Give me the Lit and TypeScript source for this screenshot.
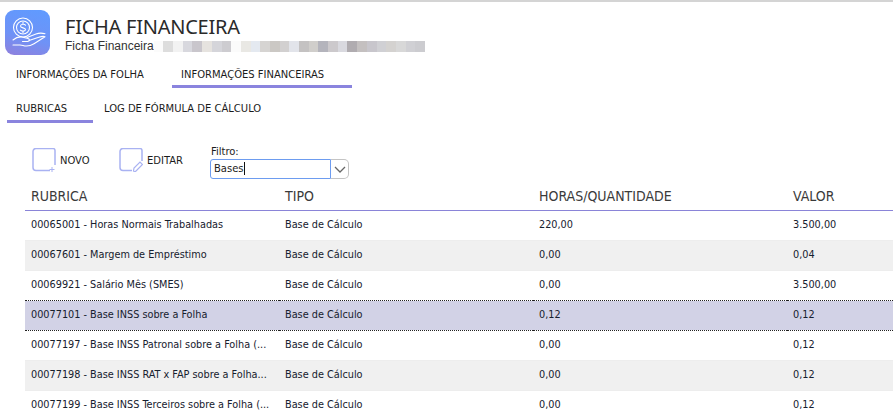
import { LitElement, html, css, svg } from "lit";
import { customElement } from "lit/decorators.js";

const rows = [
  ["00065001 - Horas Normais Trabalhadas", "Base de Cálculo", "220,00", "3.500,00"],
  ["00067601 - Margem de Empréstimo", "Base de Cálculo", "0,00", "0,04"],
  ["00069921 - Salário Mês (SMES)", "Base de Cálculo", "0,00", "3.500,00"],
  ["00077101 - Base INSS sobre a Folha", "Base de Cálculo", "0,12", "0,12"],
  ["00077197 - Base INSS Patronal sobre a Folha (...", "Base de Cálculo", "0,00", "0,12"],
  ["00077198 - Base INSS RAT x FAP sobre a Folha...", "Base de Cálculo", "0,00", "0,12"],
  ["00077199 - Base INSS Terceiros sobre a Folha (...", "Base de Cálculo", "0,00", "0,12"],
];

const blur = ["#fbfbfb","#ddd","#f2f2f2","#d8d8de","#c9c6cc","#e6e3df","#d5d5da","#cdccd0","#fbfbfb","#e9e8e4","#e4e9f0","#d6d4d2","#cbc8c4","#d2d0d0","#e2e4ea","#c4c2c2","#d0cecb","#b4b4bc","#ccc9cc","#d9d9df","#b0acb0","#c4c0c0","#c8c6cc","#d0d0d4","#d4d2d0","#d8d8d8","#d0d0d4","#ccccd0"];

@customElement("app-root")
export class AppRoot extends LitElement {
  static styles = css`
    :host { display: block; width: 893px; height: 418px; overflow: hidden; background: #fff; font-family: "DejaVu Sans Condensed", "DejaVu Sans", sans-serif; color: #1c1c1c; }
    .top { height: 2px; background: #d4d4d4; }
    .head { display: flex; box-sizing: border-box; padding: 8px 0 0 5px; height: 54px; }
    .logo { width: 45px; height: 45px; border-radius: 9px; background: linear-gradient(195deg, #5f9bff 0%, #6f92f6 60%, #9080dc 100%); }
    .titles { margin-left: 15px; padding-top: 5px; }
    h1 { margin: 0 0 1px; font: 400 20px/23px "Noto Sans", sans-serif; letter-spacing: -0.25px; color: #2a2a2a; }
    .sub { display: flex; align-items: center; font: 12px/14px "Liberation Sans", sans-serif; color: #333; }
    .sub i { display: block; width: 9.7px; height: 11px; }
    .tabs { display: flex; }
    .t1 { height: 31px; margin-top: 2px; }
    .tab { font-size: 11.1px; line-height: 12px; box-sizing: border-box; white-space: nowrap; }
    .t1 .tab:first-child { width: 172px; padding: 11px 0 0 16px; }
    .t1 .on { width: 180px; padding: 11px 0 0 9px; height: 30px; border-bottom: 3px solid #8a84de; }
    .t2 { height: 36px; margin-left: 7px; }
    .t2 .tab { padding: 14px 0 0 9px; height: 34px; }
    .t2 .on { width: 86px; border-bottom: 3px solid #8a84de; }
    .t2 .off { padding-left: 11px; }
    .bar { display: flex; box-sizing: border-box; height: 60px; padding-left: 32px; }
    .btn { display: flex; font-size: 11.1px; align-items: flex-start; padding-top: 23px; }
    .btn svg { display: block; }
    .btn span { margin: 7px 0 0 4px; line-height: 12px; }
    .b1 { width: 87px; }
    .b2 { width: 92px; }
    .filter { padding-top: 21px; font-size: 11.1px; }
    .filter label { display: block; line-height: 12px; height: 13px; }
    .combo { display: flex; width: 139px; height: 20px; margin-left: -1px; }
    .input { width: 121px; height: 20px; box-sizing: border-box; border: 1px solid #6d9cf0; border-radius: 3px 0 0 3px; padding-left: 3px; line-height: 18px; }
    .input b { display: inline-block; width: 1px; height: 13px; background: #111; vertical-align: -3px; }
    .arrow { width: 18px; height: 20px; box-sizing: border-box; border: 1px solid #c4c4c4; border-left: 0; border-radius: 0 5px 5px 0; display: flex; align-items: center; justify-content: center; }
    table { margin-left: 25px; width: 868px; border-collapse: collapse; table-layout: fixed; }
    th { height: 25px; padding: 0 0 2px 6px; text-align: left; font: 400 14px/16px "DejaVu Sans Condensed", "DejaVu Sans", sans-serif; color: #3a3a3a; border-bottom: 1px solid #8a84d8; box-sizing: border-box; }
    td { height: 30px; padding: 0 0 2px 6px; font-size: 10.8px; white-space: nowrap; color: #16202e; box-sizing: border-box; overflow: hidden; }
    tr.alt td { background: #f0f0f0; border-top: 1px solid #ededed; border-bottom: 1px solid #ededed; }
    tr.sel td { background: #d2d2e6; border-top: 1px dotted #222; border-bottom: 1px dotted #222; }
    col { width: 254px; }
  `;

  logo() {
    return svg`<svg class="logo" viewBox="0 0 45 45" fill="none" stroke="#fff" stroke-width="1.1" stroke-linecap="round" stroke-linejoin="round">
      <circle cx="18" cy="17.500" r="9.500"/><circle cx="18" cy="17.500" r="6.500"/>
      <path d="M20.500 15.200c-.7-1.200-4.800-1.400-5 .8-.2 2.500 5.100 1.200 5 3.600-.1 1.900-4 1.900-5.100.6M18 12.300v1.300M18 21.500v1.300"/>
      <path d="M8 30c3-2.500 6-3.500 9-3l6 1.500c2 .5 2 3-.5 3h-5"/>
      <path d="M22 27.500l9-3.500c3-1.200 6.500-1 9-.3"/>
      <path d="M24 30.500l9-3c2.500-.8 5-1.800 7-.8l-11 7c-4 2.500-8 2.700-11 1.800l-3-.5H8"/>
    </svg>`;
  }

  render() {
    return html`
      <div class="top"></div>
      <div class="head">
        ${this.logo()}
        <div class="titles">
          <h1>FICHA FINANCEIRA</h1>
          <div class="sub"><span>Ficha Financeira</span>${blur.map((c) => html`<i style="background:${c}"></i>`)}</div>
        </div>
      </div>
      <div class="tabs t1">
        <div class="tab">INFORMAÇÕES DA FOLHA</div>
        <div class="tab on">INFORMAÇÕES FINANCEIRAS</div>
      </div>
      <div class="tabs t2">
        <div class="tab on">RUBRICAS</div>
        <div class="tab off">LOG DE FÓRMULA DE CÁLCULO</div>
      </div>
      <div class="bar">
        <div class="btn b1">
          <svg width="24" height="24" viewBox="0 0 24 24" fill="none" stroke="#a9b2f2" stroke-width="1.500"><path d="M18 22.500H4a3 3 0 0 1-3-3V3.500a3 3 0 0 1 3-3h17a2 2 0 0 1 2 2V17"/><path d="M20 19v5M17.500 21.500h5" stroke-width="1"/></svg>
          <span>NOVO</span>
        </div>
        <div class="btn b2">
          <svg width="24" height="24" viewBox="0 0 24 24" fill="none" stroke="#a9b2f2" stroke-width="1.500"><path d="M13 22.500H4a3 3 0 0 1-3-3V3.500a3 3 0 0 1 3-3h17a2 2 0 0 1 2 2V13"/><path d="M16 24l-1.500-1 .5-3 6-6 2.500 2.500-6 6z" stroke-width="1.200"/></svg>
          <span>EDITAR</span>
        </div>
        <div class="filter">
          <label>Filtro:</label>
          <div class="combo">
            <div class="input">Bases<b></b></div>
            <div class="arrow"><svg width="12" height="7" viewBox="0 0 12 7" fill="none" stroke="#666" stroke-width="1.300"><path d="M1 1l5 5 5-5"/></svg></div>
          </div>
        </div>
      </div>
      <table>
        <colgroup><col /><col /><col /><col /></colgroup>
        <thead><tr><th>RUBRICA</th><th>TIPO</th><th>HORAS/QUANTIDADE</th><th>VALOR</th></tr></thead>
        <tbody>
          ${rows.map((r, i) => html`<tr class=${i === 3 ? "sel" : i % 2 ? "alt" : ""}>${r.map((c) => html`<td>${c}</td>`)}</tr>`)}
        </tbody>
      </table>
    `;
  }
}
